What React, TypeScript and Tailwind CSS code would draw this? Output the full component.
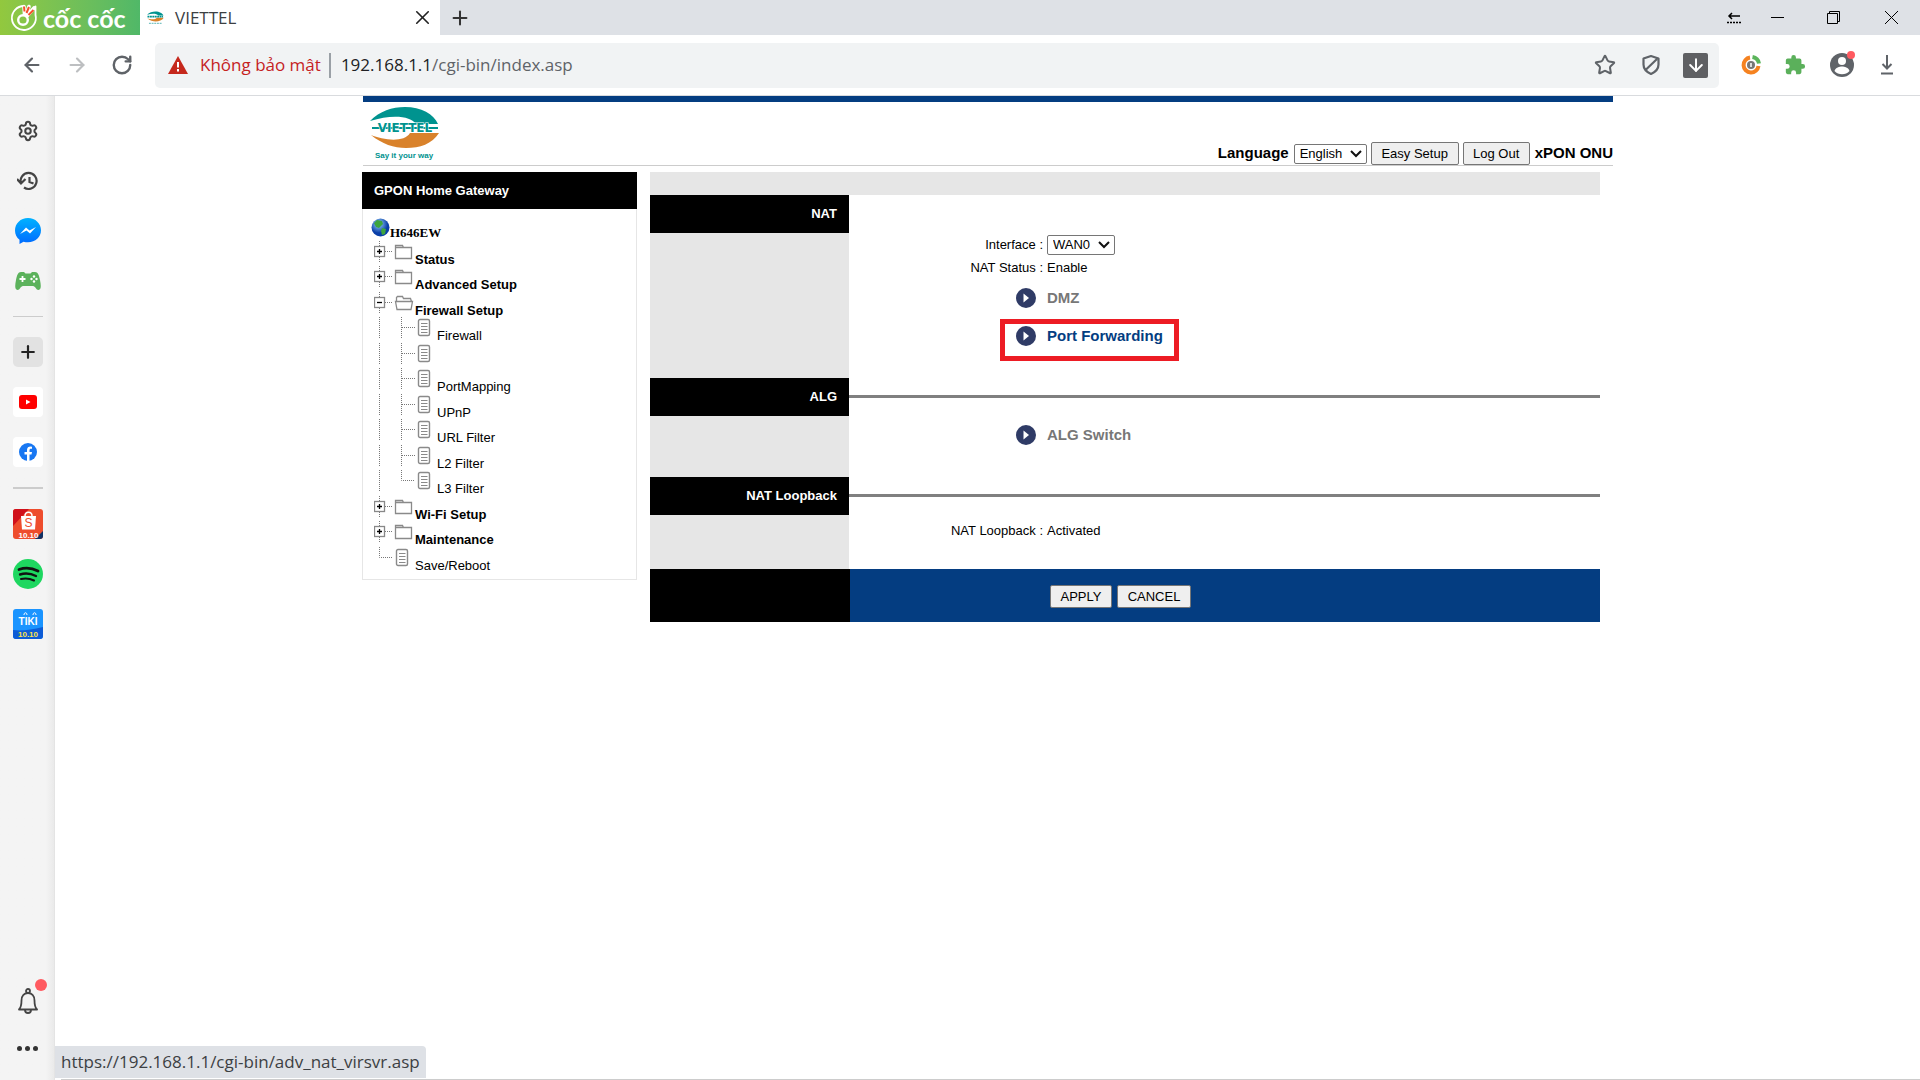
import { ReactNode } from "react";
import {
  ArrowLeft, ArrowRight, RotateCw, X, Plus, Settings, Star, ArrowDown,
} from "lucide-react";

const ui = "font-['Open_Sans','Noto_Sans',sans-serif]";

function ViettelLogo({ className, full }: { className: string; full?: boolean }) {
  return (
    <svg viewBox="0 0 70 54" className={className} aria-label="Viettel">
      <path d="M0 14C10 4 22 0 35 0c16 0 29 7 33 17H46C41 9 22 7 0 14Z" fill="#00938f" />
      <path d="M69 26C62 37 50 41 36 41 24 41 12 37 1 28c12 5 33 8 39-2Z" fill="#d9822b" />
      {full ? (
        <>
          <path d="M2 21h66" stroke="#00938f" strokeWidth="2" />
          <text x="35" y="25" textAnchor="middle" fontFamily="DejaVu Sans" fontWeight="700" fontSize="12" fill="#00938f" stroke="#fff" strokeWidth="1" paintOrder="stroke">VIETTEL</text>
          <text x="34" y="51" textAnchor="middle" fontFamily="Liberation Sans" fontWeight="700" fontSize="8" fill="#00938f">Say it your way</text>
        </>
      ) : (
        <>
          <path d="M2 21h64" stroke="#00938f" strokeWidth="7" strokeDasharray="8 2" />
          <path d="M8 49h52" stroke="#7cc4c4" strokeWidth="5" strokeDasharray="8 3" />
        </>
      )}
    </svg>
  );
}

function CocCocMark() {
  return (
    <svg viewBox="0 0 30 30" className="size-[30px]" fill="none">
      <path d="M15 3A12 12 0 1 0 26.500 12V3.500L17 13" stroke="#fff" strokeWidth="1.800" strokeLinejoin="round" />
      <circle cx="14" cy="17" r="4.800" stroke="#fff" strokeWidth="2.400" />
      <path d="M15 3.500l.5 7.500M20 3.500l-3 8M25 5l-7 8" stroke="#fff" strokeWidth="3.600" strokeLinecap="round" />
      <path d="M15 3.500l.5 5M20 4l-2.500 6M24.500 7l-5 5" stroke="#f4512c" strokeWidth="2" />
    </svg>
  );
}

function TabStrip() {
  return (
    <div className="flex h-[35px] items-stretch bg-[#dee1e6]">
      <div className="flex w-[140px] items-center gap-1 bg-linear-to-r from-[#92c83e] to-[#50b868] pl-[9px] font-['Lato',sans-serif] text-[25px] leading-[30px] font-bold text-white">
        <CocCocMark />
        <span>cốc cốc</span>
      </div>
      <div className="flex w-[300px] items-center bg-white pr-[6px] pl-[7px]">
        <ViettelLogo className="h-[18px] w-[17px]" />
        <span className="ml-[11px] flex-1 text-[17px] text-[#3c4043]">VIETTEL</span>
        <button aria-label="Close tab"><X className="size-[23px] text-[#222]" strokeWidth={1.7} /></button>
      </div>
      <button aria-label="New tab" className="ml-[9px]"><Plus className="size-[22px] text-[#333]" strokeWidth={2.2} /></button>
      <div className="ml-auto flex items-center text-black">
        <svg viewBox="0 0 14 12" className="mr-[30px] h-3 w-[14px]" stroke="currentColor" fill="none">
          <path d="M2 4h11M5 1L2 4l3 3" strokeWidth="1.500" />
          <path d="M0 10.500h14" strokeWidth="1.500" strokeDasharray="2 1" />
        </svg>
        <button aria-label="Minimize" className="mr-[43px] h-px w-[13px] bg-black" />
        <button aria-label="Restore" className="mr-[45px]">
          <svg viewBox="0 0 13 13" className="size-[13px]" stroke="currentColor" fill="none">
            <path d="M.5 2.500h10v10h-10zM2.500 2.500v-2h10v10h-2" />
          </svg>
        </button>
        <button aria-label="Close window" className="mr-[22px]">
          <svg viewBox="0 0 13 13" className="size-[13px]" stroke="currentColor"><path d="M0 0l13 13M13 0L0 13" /></svg>
        </button>
      </div>
    </div>
  );
}

function Toolbar() {
  return (
    <div className="flex h-[61px] items-center border-b border-[#d9dbde] bg-white pr-[26px] pl-[21px] text-[#5f6368]">
      <button aria-label="Back"><ArrowLeft className="size-[22px]" strokeWidth={2.4} /></button>
      <button aria-label="Forward" className="ml-[23px] text-[#bdbfc1]"><ArrowRight className="size-[22px]" strokeWidth={2.4} /></button>
      <button aria-label="Reload" className="ml-[23px]"><RotateCw className="size-[22px]" strokeWidth={2.6} /></button>
      <div className="ml-[22px] flex h-[45px] flex-1 items-center rounded-[5px] bg-[#f1f3f4] pr-[11px] pl-[13px]">
        <svg viewBox="0 0 20 18" className="h-[18px] w-5">
          <path d="M10 0l10 18H0z" fill="#c5281c" />
          <path d="M10 6v5.500M10 13v2.500" stroke="#fff" strokeWidth="2" />
        </svg>
        <span className="ml-3 text-[17px] text-[#c5221f]">Không bảo mật</span>
        <span className="ml-2 h-[25px] w-[2px] bg-[#9aa0a6]" />
        <div className="ml-[10px] flex-1 text-[17px] text-[#5f6368]">
          <span className="text-[#202124]">192.168.1.1</span>/cgi-bin/index.asp
        </div>
        <button aria-label="Bookmark"><Star className="size-[22px]" strokeWidth={2.2} /></button>
        <button aria-label="Shield" className="ml-[25px]">
          <svg viewBox="0 0 20 22" className="h-[22px] w-5" fill="none" stroke="currentColor" strokeWidth="2.200" strokeLinejoin="round">
            <path d="M10 2l7.500 2.500v6c0 4-3 7.500-7.500 9.500-4.500-2-7.500-5.500-7.500-9.500v-6zM4.500 16L16 5" />
          </svg>
        </button>
        <button aria-label="Save media" className="ml-[22px] grid size-[25px] place-items-center rounded-[2px] bg-[#5f6063] text-white">
          <ArrowDown className="size-[20px]" strokeWidth={2.4} />
        </button>
      </div>
      <svg viewBox="0 0 20 20" className="ml-[22px] size-5" fill="none">
        <path d="M9 2.500a7.500 7.500 0 1 0 8.500 8.500" stroke="#f58220" strokeWidth="4" />
        <path d="M11.500 2A8 8 0 0 1 18 8.500" stroke="#5bb55b" strokeWidth="4" />
        <circle cx="10" cy="10" r="4" fill="#777" />
        <path d="M10 8v4" stroke="#fff" strokeWidth="1.500" />
      </svg>
      <svg viewBox="0 0 24 24" className="ml-[23px] size-[22px]" fill="#5bb05b">
        <path d="M20.500 11H19V7a2 2 0 0 0-2-2h-4V3.500a2.500 2.500 0 0 0-5 0V5H4a2 2 0 0 0-2 2v3.800h1.500a2.700 2.700 0 0 1 0 5.400H2V20a2 2 0 0 0 2 2h3.800v-1.500a2.700 2.700 0 0 1 5.400 0V22H17a2 2 0 0 0 2-2v-4h1.500a2.500 2.500 0 0 0 0-5z" />
      </svg>
      <button aria-label="Profile" className="relative ml-[24px]">
        <svg viewBox="0 0 24 24" className="size-6">
          <circle cx="12" cy="12" r="12" fill="#5f6368" />
          <circle cx="12" cy="8" r="4" fill="#fff" />
          <path d="M4.500 18c1-3.500 5-4.500 7.500-4.500s6.500 1 7.500 4.500c-2 2.200-4.500 3.300-7.500 3.300S6.500 20.200 4.500 18z" fill="#fff" />
        </svg>
        <span className="absolute -top-[2px] -right-px size-2 rounded-full bg-[#ff5a60]" />
      </button>
      <button aria-label="Downloads" className="ml-[26px]">
        <svg viewBox="0 0 14 20" className="h-5 w-[14px]" fill="none" stroke="currentColor" strokeWidth="2">
          <path d="M7 0v13M2.500 9L7 13.500 11.500 9M1 18.500h12" />
        </svg>
      </button>
    </div>
  );
}

function Sidebar() {
  return (
    <aside className="flex w-[55px] shrink-0 flex-col items-center border-r border-[#e4e4e4] bg-linear-to-r from-[#f4f4f4] from-85% to-[#eaeaea] pt-6 pl-px text-[#444]">
      <button aria-label="Settings"><Settings className="size-[22px]" strokeWidth={2.2} /></button>
      <button aria-label="History" className="mt-[29px]">
        <svg viewBox="0 0 22 20" className="h-5 w-[22px]" fill="none" stroke="currentColor" strokeWidth="2.200">
          <path d="M4 12.500A8 8 0 1 1 7 16.500M0 8l4 4.500L8.500 8M12.500 6v5l4 1.500" />
        </svg>
      </button>
      <button aria-label="Messenger" className="mt-[27px]">
        <svg viewBox="0 0 26 26" className="size-[26px]">
          <defs><linearGradient id="m" x2="0" y2="1"><stop stopColor="#00b2ff" /><stop offset="1" stopColor="#006aff" /></linearGradient></defs>
          <path d="M13 0C5.500 0 0 5.500 0 12.500c0 4 1.700 7 4.500 9.200V26l4-2.300c1.400.4 3 .6 4.500.6 7.500 0 13-5.300 13-12S20.500 0 13 0z" fill="url(#m)" />
          <path d="M5 16l6-6.500 3.500 3L21 9l-6 6.500-3.500-3z" fill="#fff" />
        </svg>
      </button>
      <button aria-label="Games" className="mt-[28px]">
        <svg viewBox="0 0 26 18" className="h-[18px] w-[26px]">
          <path d="M6 0h3l1.500 1.500h5L17 0h3c3 0 4 3 5 8s1.500 10-1.500 10c-2.500 0-3-4-5.500-4H8c-2.500 0-3 4-5.500 4C-.5 18 0 13 1 8S3 0 6 0z" fill="#5cb25c" />
          <path d="M7.500 4v6M4.500 7h6" stroke="#fff" strokeWidth="1.800" />
          <g fill="#fff"><circle cx="19" cy="4.500" r="1.200" /><circle cx="19" cy="9.500" r="1.200" /><circle cx="16.500" cy="7" r="1.200" /><circle cx="21.500" cy="7" r="1.200" /></g>
        </svg>
      </button>
      <hr className="mt-[26px] w-[30px] border-[#ccc]" />
      <button aria-label="Add" className="mt-5 grid size-[30px] place-items-center rounded-[5px] bg-[#e2e2e2] text-[#222]">
        <Plus className="size-[20px]" strokeWidth={2.6} />
      </button>
      <a href="#youtube" aria-label="YouTube" className="mt-5 grid size-[30px] place-items-center rounded-[4px] bg-white">
        <svg viewBox="0 0 18 14" className="h-[14px] w-[18px]"><rect width="18" height="14" rx="3" fill="#f00" /><path d="M7 4.500v5l4.500-2.500z" fill="#fff" /></svg>
      </a>
      <a href="#facebook" aria-label="Facebook" className="mt-5 grid size-[30px] place-items-center rounded-[4px] bg-white">
        <svg viewBox="0 0 18 18" className="size-[18px]"><circle cx="9" cy="9" r="9" fill="#1877f2" /><path d="M8 18v-6.500H5.500V9H8V7c0-2.500 1.500-3.500 3.500-3.500l1.500.2v2h-1c-1 0-1.500.5-1.500 1.500V9H13l-.5 2.500h-2V18z" fill="#fff" /></svg>
      </a>
      <hr className="mt-5 w-[30px] border-t-2 border-[#ccc]" />
      <a href="#shopee" aria-label="Shopee" className="mt-5">
        <svg viewBox="0 0 30 30" className="size-[30px]">
          <rect width="30" height="30" rx="3" fill="#ee4d2d" />
          <path d="M0 3a3 3 0 0 1 3-3h13L0 17z" fill="#d0111b" />
          <path d="M30 22v5a3 3 0 0 1-3 3h-5z" fill="#113366" />
          <path d="M8 7h15l-1 13.500H9z" fill="#fff" />
          <path d="M12 7c0-5 7-5 7 0" stroke="#fff" fill="none" strokeWidth="1.500" />
          <text x="15.500" y="18" textAnchor="middle" fontFamily="Liberation Sans" fontSize="12" fill="#ee4d2d">S</text>
          <text x="15.500" y="28.500" textAnchor="middle" fontFamily="Liberation Sans" fontWeight="700" fontSize="8" fill="#fff">10.10</text>
        </svg>
      </a>
      <a href="#spotify" aria-label="Spotify" className="mt-5">
        <svg viewBox="0 0 30 30" className="size-[30px]" fill="none" stroke="#111" strokeLinecap="round">
          <circle cx="15" cy="15" r="15" fill="#1ed760" stroke="none" />
          <path d="M6 10.500c6-2 13-1.500 19 1.500" strokeWidth="2.800" />
          <path d="M7 15.500c5-1.500 11-1 16 1.500" strokeWidth="2.400" />
          <path d="M8 20c4-1 9-.5 13 1.500" strokeWidth="2" />
        </svg>
      </a>
      <a href="#tiki" aria-label="Tiki" className="mt-5">
        <svg viewBox="0 0 30 30" className="size-[30px]">
          <rect width="30" height="30" rx="3" fill="#1a94ff" />
          <path d="M0 21c8 1 18 0 30-3v9a3 3 0 0 1-3 3H3a3 3 0 0 1-3-3z" fill="#0d5cd6" />
          <path d="M11 6c0-3 3-3 3 0M20 6c0-3 3-3 3 0" stroke="#fff" fill="none" />
          <text x="15" y="16" textAnchor="middle" fontFamily="Liberation Sans" fontWeight="700" fontSize="10" fill="#fff">TIKI</text>
          <text x="15" y="28" textAnchor="middle" fontFamily="Liberation Sans" fontWeight="700" fontSize="8" fill="#ffe24a">10.10</text>
        </svg>
      </a>
      <button aria-label="Notifications" className="relative mt-auto">
        <svg viewBox="0 0 20 26" className="h-[26px] w-5" fill="none" stroke="currentColor" strokeWidth="1.800" strokeLinejoin="round">
          <circle cx="10" cy="3" r="2" />
          <path d="M1 21.500c2-2 2.500-4 2.500-9C3.500 7.500 6.500 5 10 5s6.500 2.500 6.500 7.500c0 5 .5 7 2.500 9zM7 22c0 4 6 4 6 0" />
        </svg>
        <span className="absolute -top-[9px] -right-[9px] size-3 rounded-full bg-[#ff5a60]" />
      </button>
      <button aria-label="More" className="mt-8 mb-[29px] flex gap-[3px]">
        <span className="size-[5px] rounded-full bg-[#333]" />
        <span className="size-[5px] rounded-full bg-[#333]" />
        <span className="size-[5px] rounded-full bg-[#333]" />
      </button>
    </aside>
  );
}

type Node = { label: string; kind: "closed" | "open" | "leaf" | "last" | "doc" };
const tree: Node[] = [
  { label: "Status", kind: "closed" },
  { label: "Advanced Setup", kind: "closed" },
  { label: "Firewall Setup", kind: "open" },
  { label: "Firewall", kind: "leaf" },
  { label: "", kind: "leaf" },
  { label: "PortMapping", kind: "leaf" },
  { label: "UPnP", kind: "leaf" },
  { label: "URL Filter", kind: "leaf" },
  { label: "L2 Filter", kind: "leaf" },
  { label: "L3 Filter", kind: "last" },
  { label: "Wi-Fi Setup", kind: "closed" },
  { label: "Maintenance", kind: "closed" },
  { label: "Save/Reboot", kind: "doc" },
];

const dots = { stroke: "#777", strokeDasharray: "1 1", fill: "none" };

function DocIcon({ x }: { x: number }) {
  return (
    <g transform={`translate(${x} 2)`} stroke="#8a8a8a" fill="none">
      <rect x="0.5" y="0.5" width="11" height="16" rx="1.500" strokeWidth="1.400" />
      <path d="M3 4.500h6.500M3 7.500h6.500M3 10.500h6.500M3 13.500h6.500" />
    </g>
  );
}

function Branch({ kind }: { kind: Node["kind"] }) {
  const sub = kind === "leaf" || kind === "last";
  return (
    <svg viewBox={sub ? "0 0 63 22" : "0 0 41 22"} className={sub ? "h-[22px] w-[63px] shrink-0" : "h-[22px] w-[41px] shrink-0"}>
      {sub && (
        <>
          <path d={kind === "leaf" ? "M5.500 0v21M27.500 0v21M28 10.500h13" : "M5.500 0v21M27.500 0v10.500h13"} {...dots} />
          <DocIcon x={44} />
        </>
      )}
      {kind === "doc" && (
        <>
          <path d="M5.500 0v10.500h13" {...dots} />
          <DocIcon x={22} />
        </>
      )}
      {(kind === "closed" || kind === "open") && (
        <>
          <path d="M5.500 0v21M11 10.500h8" {...dots} />
          <rect x="0.500" y="5.500" width="10" height="10" fill="#fff" stroke="#888" strokeWidth="1.300" />
          <path d={kind === "closed" ? "M3 10.500h5M5.500 8v5" : "M3 10.500h5"} stroke="#000" strokeWidth="1.300" />
          {kind === "closed" ? (
            <path d="M21.500 17.500v-13h7l1 2h8v11zM21.500 6.500h8" fill="#fff" stroke="#8a8a8a" strokeWidth="1.300" />
          ) : (
            <path d="M22.500 9.500v-4l1-1h5l1 2h7l1 3M21.500 9.500h17l-1.500 8h-14z" fill="#fff" stroke="#8a8a8a" strokeWidth="1.300" />
          )}
        </>
      )}
    </svg>
  );
}

function MenuPanel() {
  return (
    <nav className="w-[275px] shrink-0">
      <h2 className="flex h-[37px] items-center bg-black pl-3 text-[13px] font-bold text-white">GPON Home Gateway</h2>
      <div className="border border-t-0 border-[#e6e6e6] pt-[9px] pb-[7px] pl-[11px]">
        <div className="flex h-[23px] items-start">
          <svg viewBox="0 0 19 19" className="ml-[-3px] size-[19px]">
            <defs><radialGradient id="g" cx="0.4" cy="0.3"><stop stopColor="#9fd8ff" /><stop offset="1" stopColor="#0a3fa8" /></radialGradient></defs>
            <circle cx="9.500" cy="9.500" r="9" fill="url(#g)" />
            <path d="M6 2l5 1 1 3-4 4-3-1-2-4zM11 10l4 1-1 5-3 1-1-4z" fill="#3da53d" />
          </svg>
          <span className="mt-[6px] font-['Liberation_Serif',serif] text-[13px] leading-[18px] font-bold">H646EW</span>
        </div>
        <ul>
          {tree.map((n, i) => (
            <li key={i} className="flex items-start text-[13px] leading-4 odd:h-[25px] even:h-[26px]">
              <Branch kind={n.kind} />
              <a href="#menu" className={n.kind === "closed" || n.kind === "open" ? "mt-[11px] font-bold" : "mt-[11px]"}>{n.label}</a>
            </li>
          ))}
        </ul>
      </div>
    </nav>
  );
}

function Select({ id, options, className }: { id: string; options: string[]; className: string }) {
  return (
    <span className="relative inline-flex">
      <select id={id} className={`${className} appearance-none rounded-[2px] border border-[#767676] bg-white py-0 pl-[5px] text-[13px] leading-4`}>
        {options.map((o) => <option key={o}>{o}</option>)}
      </select>
      <svg viewBox="0 0 12 8" className="pointer-events-none absolute top-[6px] right-[5px] h-2 w-3" fill="none" stroke="#111" strokeWidth="2">
        <path d="M1 1l5 5 5-5" />
      </svg>
    </span>
  );
}

function Btn({ children, className }: { children: ReactNode; className: string }) {
  return <button className={`${className} h-[23px] rounded-[2px] border border-[#767676] bg-[#efefef] text-[13px] leading-none`}>{children}</button>;
}

function Section({ title, line, children, className }: { title: string; line?: boolean; children: ReactNode; className: string }) {
  return (
    <section className={`${className} flex`}>
      <div className="w-[199px] shrink-0 bg-[#e6e6e6]">
        <h3 className="flex h-[38px] items-center justify-end bg-black pr-3 text-[13px] font-bold text-white">{title}</h3>
      </div>
      <div className="flex-1">
        <div className="h-[38px] pt-[17px]">{line && <hr className="w-full border-t-[3px] border-[#808080]" />}</div>
        {children}
      </div>
    </section>
  );
}

function Row({ label, htmlFor, children }: { label: string; htmlFor?: string; children: ReactNode }) {
  return (
    <div className="flex h-[23px] items-center text-[13px]">
      <label htmlFor={htmlFor} className="w-[194px] text-right">{label} :</label>
      <div className="ml-1 flex items-center">{children}</div>
    </div>
  );
}

function LinkRow({ label, active }: { label: string; active?: boolean }) {
  return (
    <a href="#nat" className={`${active ? "text-[#043d81]" : "text-[#777]"} flex h-[38px] items-center gap-[11px] pl-[167px] text-[15px] font-bold`}>
      <svg viewBox="0 0 20 20" className="size-5"><circle cx="10" cy="10" r="10" fill="#2f3b66" /><path d="M7.500 5.500v9l5.500-4.500z" fill="#fff" /></svg>
      {label}
    </a>
  );
}

function Content() {
  return (
    <div className="mr-[13px] ml-[13px] flex-1">
      <div className="h-[23px] bg-[#e6e6e6]" />
      <Section title="NAT" className="h-[183px]">
        <Row label="Interface" htmlFor="iface"><Select id="iface" options={["WAN0"]} className="h-5 w-[68px]" /></Row>
        <Row label="NAT Status">Enable</Row>
        <LinkRow label="DMZ" />
        <div className="relative">
          <LinkRow label="Port Forwarding" active />
          <span className="pointer-events-none absolute top-[2px] left-[151px] h-[42px] w-[179px] border-5 border-[#ed1c24]" />
        </div>
      </Section>
      <Section title="ALG" line className="h-[99px]"><LinkRow label="ALG Switch" /></Section>
      <Section title="NAT Loopback" line className="h-[92px]">
        <div className="pt-[4px]"><Row label="NAT Loopback">Activated</Row></div>
      </Section>
      <div className="flex h-[53px]">
        <div className="w-[200px] shrink-0 bg-black" />
        <div className="flex flex-1 items-start gap-[5px] bg-[#043d81] pt-4 pl-[200px]">
          <Btn className="w-[62px]">APPLY</Btn>
          <Btn className="w-[74px]">CANCEL</Btn>
        </div>
      </div>
    </div>
  );
}

export default function App() {
  return (
    <div className={`${ui} flex min-h-screen flex-col bg-white`}>
      <TabStrip />
      <Toolbar />
      <div className="flex flex-1">
        <Sidebar />
        <main className="relative flex-1 font-['Liberation_Sans',Arial,sans-serif] text-black">
          <div className="mx-auto max-w-[1251px]">
            <header className="ml-px flex h-[70px] items-end justify-between border-t-6 border-b border-t-[#043d81] border-b-[#ccc]">
              <ViettelLogo className="mb-1 ml-[7px] h-[54px] w-[70px]" full />
              <div className="flex items-center gap-[5px] text-[15px] font-bold">
                <label htmlFor="lang">Language</label>
                <span className="flex items-center gap-1 font-normal">
                  <Select id="lang" options={["English"]} className="h-5 w-[73px]" />
                  <Btn className="w-[88px]">Easy Setup</Btn>
                  <Btn className="w-[67px]">Log Out</Btn>
                </span>
                <span>xPON ONU</span>
              </div>
            </header>
            <div className="mt-[6px] flex items-start">
              <MenuPanel />
              <Content />
            </div>
          </div>
          <div className={`${ui} absolute bottom-[2px] left-0 flex h-8 items-center rounded-tr-[4px] bg-[#dee1e6] px-[6px] text-[17px] whitespace-nowrap text-[#3c4043]`}>
            https://192.168.1.1/cgi-bin/adv_nat_virsvr.asp
          </div>
          <div className="absolute right-0 bottom-0 left-[6px] h-px bg-[#ccc]" />
        </main>
      </div>
    </div>
  );
}
